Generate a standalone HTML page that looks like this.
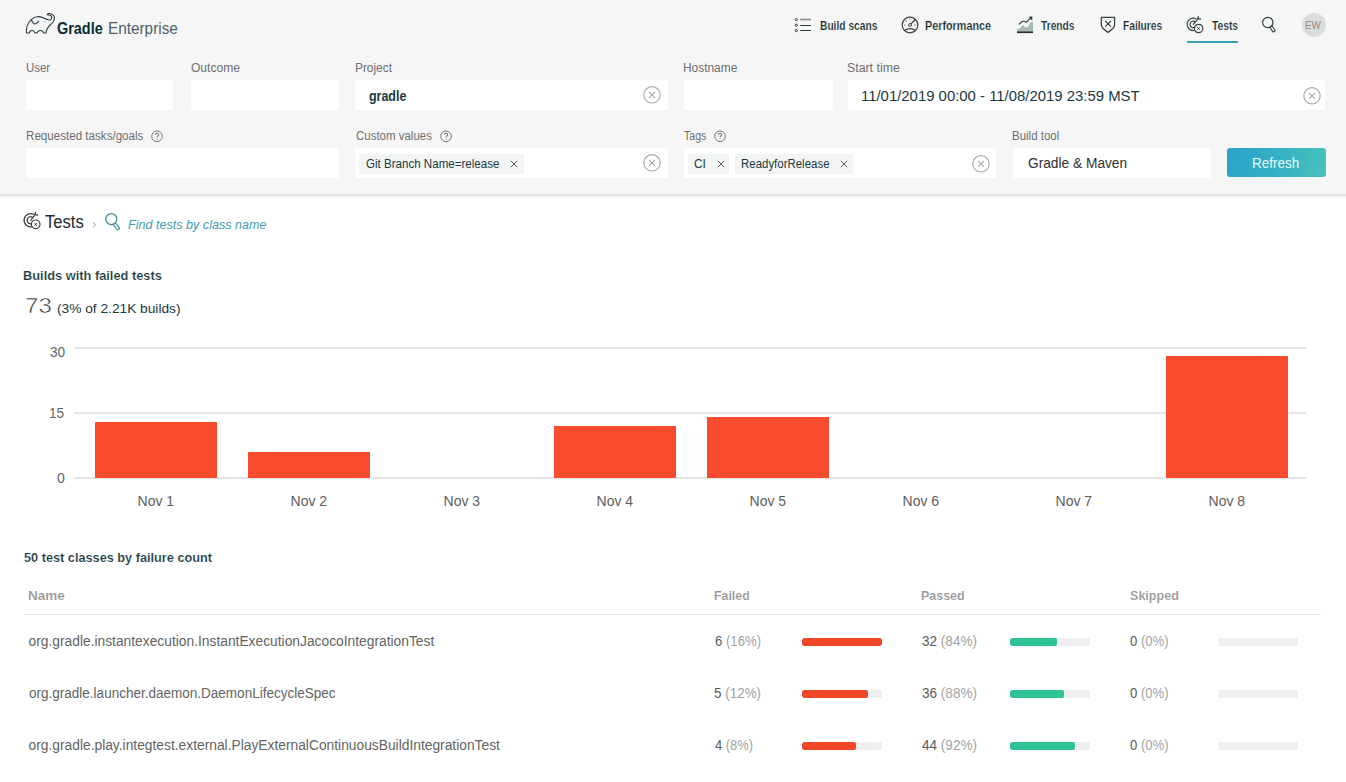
<!DOCTYPE html>
<html><head><meta charset="utf-8">
<style>
*{box-sizing:border-box;margin:0;padding:0}
html,body{width:1346px;height:782px;overflow:hidden;background:#fff;font-family:"Liberation Sans",sans-serif}
.a{position:absolute}
.t{position:absolute;white-space:nowrap;line-height:1}
#hdr{position:absolute;left:0;top:0;width:1346px;height:194px;background:#f6f6f6}
#hdrb{position:absolute;left:0;top:194px;width:1346px;height:2px;background:#e2e2e2}
#hdrs{position:absolute;left:0;top:196px;width:1346px;height:4px;background:linear-gradient(#f3f3f3,#fff)}
.inp{position:absolute;background:#fff;height:30px;border-radius:1px}
.chip{position:absolute;background:#f3f5f5;height:20px;top:154px;border-radius:2px}
.grid{position:absolute;left:74px;width:1232px;height:2px;background:#e4e4e4}
.bar{position:absolute;background:#fa4b2e;width:122px}
.trk{position:absolute;width:80px;height:8px;background:#efefef;border-radius:2px;overflow:hidden}
.trk i{position:absolute;left:0;top:0;bottom:0;border-radius:2px}
svg{position:absolute;overflow:visible}
</style></head><body>
<div id="hdr"></div><div id="hdrb"></div><div id="hdrs"></div>

<!-- logo -->
<svg style="left:24px;top:11px" width="32" height="24" viewBox="0 0 32 24" fill="none" stroke="#24383d" stroke-width="1.05" stroke-linejoin="round" stroke-linecap="round">
<path d="M2.4,22 C2.1,17.5 2.8,12.5 7.4,8.6 C9,7 11,5.8 14,5.6 C17,5.6 19.5,6.8 22,8 C24,9 26.2,9.7 27.3,8.3 C28.3,6.9 27.6,4.4 25.6,4 C24.6,3.8 23.6,4.1 23.1,3.7 C23.6,2.7 25.5,2.3 27.3,3 C29.5,3.9 30.6,6 30.3,8.2 C30,10.5 28,12.5 26.2,14 C24,16 22.3,18.5 22.1,22 L19.6,22 C19.4,20.4 18.2,19.5 16.6,19.5 C15,19.5 13.6,20.4 13,22 L11,22 C10.5,20.4 9.5,19.5 8.3,19.5 C7,19.5 5.6,20.4 5.2,22 Z"/>
<path d="M7.4,8.6 C8,10.5 9,12.6 10.7,12.9 C12,13.1 13.5,11.5 14.7,10.1"/>
<circle cx="20.9" cy="10.7" r="0.55" fill="#6a7a7d" stroke="none"/>
</svg>
<!-- nav icons -->
<svg style="left:790px;top:12px" width="26" height="26" viewBox="0 0 26 26" fill="none" stroke="#2a3a3d" stroke-width="1.2">
<circle cx="6.3" cy="7.6" r="1.15" stroke-width="0.95"/><circle cx="6.3" cy="13.2" r="1.15" stroke-width="0.95"/><circle cx="6.3" cy="18.5" r="1.15" stroke-width="0.95"/>
<path d="M10.2,7.5H21" stroke="#8a9696" stroke-width="1.7"/><path d="M10.2,13.5H21M10.2,18.5H21" stroke-width="1"/>
</svg>
<svg style="left:895px;top:12px" width="30" height="26" viewBox="0 0 30 26" fill="none" stroke="#3a4245" stroke-width="1.2">
<circle cx="15" cy="13" r="7.8"/>
<path d="M9.2,18.4 Q15,14.8 20.8,18.4"/>
<circle cx="15" cy="13" r="1.45" stroke-width="1"/>
<path d="M16.4,12.2 L15.6,11.5 L19.8,7.0 L20.8,8.0Z" fill="#2e3a3d" stroke="none"/>
<g fill="#777" stroke="none"><circle cx="11.3" cy="9.3" r="0.7"/><circle cx="15" cy="7.7" r="0.7"/><circle cx="10" cy="13" r="0.7"/><circle cx="20" cy="13" r="0.7"/></g>
</svg>
<svg style="left:1012px;top:12px" width="26" height="26" viewBox="0 0 26 26">
<path d="M5,20 L5,17.4 Q6.8,15.6 8.4,16.6 L9.8,13.8 Q10.7,12.6 11.7,13.6 L13.2,15.6 Q14.6,14.2 16,15.4 L18.2,10.8 Q18.8,10 20,10 L21,10.2 L21,20Z" fill="#a9b9b6"/>
<path d="M5,20.3H21" stroke="#1d2f30" stroke-width="1.6"/>
<path d="M7,12.3 Q9,9.5 11,9.3 T14.3,10.3 L19.6,5.3" fill="none" stroke="#3a4447" stroke-width="1.2"/>
<path d="M16.6,4.8 L20.4,4.6 L20.2,8.4Z" fill="#2c3d3f"/>
</svg>
<svg style="left:1095px;top:12px" width="26" height="26" viewBox="0 0 26 26" fill="none" stroke="#3a4245" stroke-width="1.3" stroke-linejoin="round">
<path d="M6.3,5.3 H19.6 V12.6 C19.6,15.5 16,18.5 13,20.4 C10,18.5 6.3,15.5 6.3,12.6 Z"/>
<path d="M10.3,9 L16,14.6 M16,9 L10.3,14.6" stroke-width="1.2"/>
</svg>
<svg id="tic" style="left:1182px;top:12px" width="26" height="26" viewBox="0 0 26 26" fill="none" stroke="#3a4245" stroke-width="1.2">
<path d="M14.4,7.03 A6.2,6.2 0 1 0 12.38,18.5"/>
<path d="M13.42,9.87 A3.3,3.3 0 1 0 12.43,15.5"/>
<path d="M11.3,12.4 L16.4,6.3" stroke-linecap="round"/>
<path d="M15.9,6.5 L16.3,4.6 M16.4,6.6 L18.4,7" stroke-width="1.3" stroke-linecap="round"/>
<circle cx="16.6" cy="16.5" r="4.2"/>
<path d="M15.3,15.2 L17.9,17.8 M17.9,15.2 L15.3,17.8" stroke-width="1"/>
</svg>
<div class="a" style="left:1187px;top:41px;width:51px;height:2px;background:#3aa0b7"></div>
<svg style="left:1255px;top:10px" width="26" height="26" viewBox="0 0 26 26" fill="none" stroke="#2b3b3e" stroke-width="1.3">
<circle cx="12.8" cy="12.5" r="5.2" stroke-width="1.2"/>
<rect x="-1.3" y="0" width="2.6" height="6" rx="0.4" transform="translate(15.9,16.5) rotate(-33.7)" stroke-width="1"/>
</svg>
<div class="a" style="left:1302px;top:13px;width:24px;height:24px;border-radius:50%;background:#dcdcdc"></div>

<!-- inputs -->
<div class="inp" style="left:26px;top:80px;width:147px"></div>
<div class="inp" style="left:191px;top:80px;width:148px"></div>
<div class="inp" style="left:355px;top:80px;width:313px"></div>
<div class="inp" style="left:684px;top:80px;width:149px"></div>
<div class="inp" style="left:848px;top:80px;width:477px"></div>
<div class="inp" style="left:26px;top:148px;width:313px"></div>
<div class="inp" style="left:355px;top:148px;width:313px"></div>
<div class="inp" style="left:684px;top:148px;width:312px"></div>
<div class="inp" style="left:1013px;top:148px;width:198px"></div>
<div class="a" style="left:1227px;top:148px;width:99px;height:29px;border-radius:3px;background:linear-gradient(100deg,#2ba3c9 0%,#35afc4 50%,#49c3ba 100%)"></div>

<!-- help icons -->
<svg style="left:151px;top:130px" width="12" height="12" viewBox="0 0 12 12" fill="none" stroke="#777" stroke-width="1"><circle cx="6" cy="6.3" r="5.3"/><path d="M4.3,4.8 C4.3,3.7 5,3.2 6,3.2 C7,3.2 7.7,3.8 7.7,4.7 C7.7,5.7 6.1,5.9 6.1,7.2" stroke-width="1.1"/><circle cx="6.1" cy="9" r="0.6" fill="#777" stroke="none"/></svg>
<svg style="left:440px;top:130px" width="12" height="12" viewBox="0 0 12 12" fill="none" stroke="#777" stroke-width="1"><circle cx="6" cy="6.3" r="5.3"/><path d="M4.3,4.8 C4.3,3.7 5,3.2 6,3.2 C7,3.2 7.7,3.8 7.7,4.7 C7.7,5.7 6.1,5.9 6.1,7.2" stroke-width="1.1"/><circle cx="6.1" cy="9" r="0.6" fill="#777" stroke="none"/></svg>
<svg style="left:714px;top:130px" width="12" height="12" viewBox="0 0 12 12" fill="none" stroke="#777" stroke-width="1"><circle cx="6" cy="6.3" r="5.3"/><path d="M4.3,4.8 C4.3,3.7 5,3.2 6,3.2 C7,3.2 7.7,3.8 7.7,4.7 C7.7,5.7 6.1,5.9 6.1,7.2" stroke-width="1.1"/><circle cx="6.1" cy="9" r="0.6" fill="#777" stroke="none"/></svg>

<!-- clear icons -->
<svg style="left:643px;top:86px" width="18" height="18" viewBox="0 0 18 18" fill="none" stroke="#a8a8a8" stroke-width="1.15"><circle cx="9" cy="8.8" r="8.2"/><path d="M6,5.8 L12,11.8 M12,5.8 L6,11.8"/></svg>
<svg style="left:643px;top:154px" width="18" height="18" viewBox="0 0 18 18" fill="none" stroke="#a8a8a8" stroke-width="1.15"><circle cx="9" cy="8.8" r="8.2"/><path d="M6,5.8 L12,11.8 M12,5.8 L6,11.8"/></svg>
<svg style="left:972px;top:155px" width="18" height="18" viewBox="0 0 18 18" fill="none" stroke="#a8a8a8" stroke-width="1.15"><circle cx="9" cy="8.8" r="8.2"/><path d="M6,5.8 L12,11.8 M12,5.8 L6,11.8"/></svg>
<svg style="left:1303px;top:87px" width="18" height="18" viewBox="0 0 18 18" fill="none" stroke="#a8a8a8" stroke-width="1.15"><circle cx="9" cy="8.8" r="8.2"/><path d="M6,5.8 L12,11.8 M12,5.8 L6,11.8"/></svg>

<!-- chips -->
<div class="chip" style="left:359px;width:165px"></div>
<div class="chip" style="left:688px;width:41px"></div>
<div class="chip" style="left:735px;width:118px"></div>
<svg style="left:510px;top:160px" width="8" height="8" viewBox="0 0 8 8" stroke="#606060" stroke-width="1"><path d="M0.8,0.8 L7.2,7.2 M7.2,0.8 L0.8,7.2"/></svg>
<svg style="left:717px;top:160px" width="8" height="8" viewBox="0 0 8 8" stroke="#606060" stroke-width="1"><path d="M0.8,0.8 L7.2,7.2 M7.2,0.8 L0.8,7.2"/></svg>
<svg style="left:840px;top:160px" width="8" height="8" viewBox="0 0 8 8" stroke="#606060" stroke-width="1"><path d="M0.8,0.8 L7.2,7.2 M7.2,0.8 L0.8,7.2"/></svg>

<!-- title icons -->
<svg style="left:20px;top:208px" width="24" height="24" viewBox="0 0 24 24" fill="none" stroke="#3a4245" stroke-width="1.2">
<path d="M14,6.6 A6.6,6.6 0 1 0 11.85,18.8"/>
<path d="M12.6,9.2 A3.6,3.6 0 1 0 11.8,15.7"/>
<path d="M10.7,12.3 L15.6,6.2" stroke-linecap="round"/>
<path d="M15.1,6.4 L15.5,4.5 M15.6,6.6 L17.6,7" stroke-width="1.3" stroke-linecap="round"/>
<circle cx="15.7" cy="16.3" r="4.3"/>
<path d="M14.4,15 L17,17.6 M17,15 L14.4,17.6" stroke-width="1"/>
</svg>
<svg style="left:88px;top:208px" width="40" height="28" viewBox="0 0 40 28" fill="none">
<path d="M5.3,14.2 L7.4,16.9 L5.3,19.6" stroke="#9a9a9a" stroke-width="1"/>
<circle cx="23.3" cy="11.1" r="5.5" stroke="#3c8e9c" stroke-width="1.3"/>
<rect x="-1.4" y="0" width="2.8" height="7" rx="0.5" transform="translate(26.4,15.7) rotate(-37)" stroke="#3c8e9c" stroke-width="1.1" fill="#e3f8fa"/>
</svg>

<!-- chart -->
<div class="grid" style="top:347px"></div>
<div class="grid" style="top:412px"></div>
<div class="grid" style="top:477px"></div>
<div class="bar" style="left:95px;top:422px;height:56px"></div>
<div class="bar" style="left:248px;top:452px;height:26px"></div>
<div class="bar" style="left:554px;top:426px;height:52px"></div>
<div class="bar" style="left:707px;top:417px;height:61px"></div>
<div class="bar" style="left:1166px;top:356px;height:122px"></div>

<!-- table -->
<div class="a" style="left:24px;top:614px;width:1297px;height:1px;background:#e6e6e6"></div>
<div class="trk" style="left:802px;top:638px"><i style="width:80px;background:#f4482c"></i></div>
<div class="trk" style="left:1010px;top:638px"><i style="width:47px;background:#2dc497"></i></div>
<div class="trk" style="left:1218px;top:638px"></div>
<div class="trk" style="left:802px;top:690px"><i style="width:66px;background:#f4482c"></i></div>
<div class="trk" style="left:1010px;top:690px"><i style="width:54px;background:#2dc497"></i></div>
<div class="trk" style="left:1218px;top:690px"></div>
<div class="trk" style="left:802px;top:742px"><i style="width:54px;background:#f4482c"></i></div>
<div class="trk" style="left:1010px;top:742px"><i style="width:65px;background:#2dc497"></i></div>
<div class="trk" style="left:1218px;top:742px"></div>

<div class="t" id="lg1" style="left:57.30px;top:21.00px;font-size:16px;color:#0b2e36;font-weight:bold;font-style:normal;transform:scaleX(0.9020);transform-origin:0 0;">Gradle</div>
<div class="t" id="lg2" style="left:107.80px;top:21.00px;font-size:16px;color:#4e5f66;font-weight:normal;font-style:normal;transform:scaleX(0.9577);transform-origin:0 0;">Enterprise</div>
<div class="t" id="nv0" style="left:820.10px;top:19.01px;font-size:13px;color:#142a2f;font-weight:bold;font-style:normal;transform:scaleX(0.7862);transform-origin:0 0;-webkit-text-stroke:0.2px #f6f6f6;">Build scans</div>
<div class="t" id="nv1" style="left:925.40px;top:19.01px;font-size:13px;color:#142a2f;font-weight:bold;font-style:normal;transform:scaleX(0.8305);transform-origin:0 0;-webkit-text-stroke:0.2px #f6f6f6;">Performance</div>
<div class="t" id="nv2" style="left:1041.30px;top:19.01px;font-size:13px;color:#142a2f;font-weight:bold;font-style:normal;transform:scaleX(0.7864);transform-origin:0 0;-webkit-text-stroke:0.2px #f6f6f6;">Trends</div>
<div class="t" id="nv3" style="left:1123.40px;top:19.01px;font-size:13px;color:#142a2f;font-weight:bold;font-style:normal;transform:scaleX(0.7840);transform-origin:0 0;-webkit-text-stroke:0.2px #f6f6f6;">Failures</div>
<div class="t" id="nv4" style="left:1211.50px;top:19.01px;font-size:13px;color:#142a2f;font-weight:bold;font-style:normal;transform:scaleX(0.7879);transform-origin:0 0;-webkit-text-stroke:0.2px #f6f6f6;">Tests</div>
<div class="t" id="ew" style="left:1305.20px;top:21.00px;font-size:10px;color:#8d8d8d;font-weight:normal;font-style:normal;transform:scaleX(0.9867);transform-origin:0 0;">EW</div>
<div class="t" id="lb0" style="left:25.50px;top:62.01px;font-size:12px;color:#6e6e6e;font-weight:normal;font-style:normal;transform:scaleX(0.9523);transform-origin:0 0;">User</div>
<div class="t" id="lb1" style="left:190.70px;top:62.01px;font-size:12px;color:#6e6e6e;font-weight:normal;font-style:normal;transform:scaleX(1.0042);transform-origin:0 0;">Outcome</div>
<div class="t" id="lb2" style="left:354.50px;top:62.01px;font-size:12px;color:#6e6e6e;font-weight:normal;font-style:normal;transform:scaleX(0.9893);transform-origin:0 0;">Project</div>
<div class="t" id="lb3" style="left:682.90px;top:62.01px;font-size:12px;color:#6e6e6e;font-weight:normal;font-style:normal;transform:scaleX(0.9926);transform-origin:0 0;">Hostname</div>
<div class="t" id="lb4" style="left:847.40px;top:62.01px;font-size:12px;color:#6e6e6e;font-weight:normal;font-style:normal;transform:scaleX(1.0280);transform-origin:0 0;">Start time</div>
<div class="t" id="lb5" style="left:25.50px;top:130.01px;font-size:12px;color:#6e6e6e;font-weight:normal;font-style:normal;transform:scaleX(0.9670);transform-origin:0 0;">Requested tasks/goals</div>
<div class="t" id="lb6" style="left:355.50px;top:130.01px;font-size:12px;color:#6e6e6e;font-weight:normal;font-style:normal;transform:scaleX(0.9567);transform-origin:0 0;">Custom values</div>
<div class="t" id="lb7" style="left:683.90px;top:130.01px;font-size:12px;color:#6e6e6e;font-weight:normal;font-style:normal;transform:scaleX(0.8800);transform-origin:0 0;">Tags</div>
<div class="t" id="lb8" style="left:1011.90px;top:130.01px;font-size:12px;color:#6e6e6e;font-weight:normal;font-style:normal;transform:scaleX(0.9583);transform-origin:0 0;">Build tool</div>
<div class="t" id="v1" style="left:368.60px;top:89.01px;font-size:14px;color:#1b3940;font-weight:bold;font-style:normal;transform:scaleX(0.8889);transform-origin:0 0;">gradle</div>
<div class="t" id="v2" style="left:860.90px;top:89.01px;font-size:14px;color:#1b3940;font-weight:normal;font-style:normal;transform:scaleX(1.0644);transform-origin:0 0;">11/01/2019 00:00 - 11/08/2019 23:59 MST</div>
<div class="t" id="v3" style="left:1027.70px;top:156.01px;font-size:14px;color:#303030;font-weight:normal;font-style:normal;transform:scaleX(0.9800);transform-origin:0 0;">Gradle &amp; Maven</div>
<div class="t" id="rf" style="left:1252.40px;top:156.01px;font-size:14px;color:#e6fbfd;font-weight:normal;font-style:normal;transform:scaleX(0.9638);transform-origin:0 0;">Refresh</div>
<div class="t" id="c1" style="left:366.10px;top:158.01px;font-size:12px;color:#1b3940;font-weight:normal;font-style:normal;transform:scaleX(0.9638);transform-origin:0 0;">Git Branch Name=release</div>
<div class="t" id="c2" style="left:694.00px;top:158.01px;font-size:12px;color:#1b3940;font-weight:normal;font-style:normal;transform:scaleX(0.9845);transform-origin:0 0;">CI</div>
<div class="t" id="c3" style="left:740.50px;top:158.01px;font-size:12px;color:#1b3940;font-weight:normal;font-style:normal;transform:scaleX(0.9545);transform-origin:0 0;">ReadyforRelease</div>
<div class="t" id="tt" style="left:45.20px;top:213.01px;font-size:18px;color:#1b2b2f;font-weight:normal;font-style:normal;transform:scaleX(0.9222);transform-origin:0 0;">Tests</div>
<div class="t" id="ft" style="left:127.50px;top:218.01px;font-size:13.5px;color:#3f9db3;font-weight:normal;font-style:italic;transform:scaleX(0.9324);transform-origin:0 0;">Find tests by class name</div>
<div class="t" id="bw" style="left:23.40px;top:269.01px;font-size:13px;color:#1b3940;font-weight:bold;font-style:normal;transform:scaleX(0.9857);transform-origin:0 0;-webkit-text-stroke:0.15px #fff;">Builds with failed tests</div>
<div class="t" id="n73" style="left:25.10px;top:295.01px;font-size:22px;color:#333;font-weight:normal;font-style:normal;transform:scaleX(1.0963);transform-origin:0 0;-webkit-text-stroke:0.55px #fff;">73</div>
<div class="t" id="pct" style="left:56.80px;top:302.01px;font-size:13px;color:#1b3940;font-weight:normal;font-style:normal;transform:scaleX(1.0552);transform-origin:0 0;">(3% of 2.21K builds)</div>
<div class="t" id="y30" style="left:50.30px;top:345.01px;font-size:14px;color:#666;font-weight:normal;font-style:normal;transform:scaleX(0.9754);transform-origin:0 0;">30</div>
<div class="t" id="y15" style="left:49.20px;top:406.01px;font-size:14px;color:#666;font-weight:normal;font-style:normal;transform:scaleX(0.9738);transform-origin:0 0;">15</div>
<div class="t" id="y0" style="left:57.40px;top:471.01px;font-size:14px;color:#666;font-weight:normal;font-style:normal;transform:scaleX(1.0045);transform-origin:0 0;">0</div>
<div class="t" id="nov0" style="left:137.55px;top:494.01px;font-size:14px;color:#5e5e5e;font-weight:normal;font-style:normal;">Nov 1</div>
<div class="t" id="nov1" style="left:290.55px;top:494.01px;font-size:14px;color:#5e5e5e;font-weight:normal;font-style:normal;">Nov 2</div>
<div class="t" id="nov2" style="left:443.55px;top:494.01px;font-size:14px;color:#5e5e5e;font-weight:normal;font-style:normal;">Nov 3</div>
<div class="t" id="nov3" style="left:596.55px;top:494.01px;font-size:14px;color:#5e5e5e;font-weight:normal;font-style:normal;">Nov 4</div>
<div class="t" id="nov4" style="left:749.55px;top:494.01px;font-size:14px;color:#5e5e5e;font-weight:normal;font-style:normal;">Nov 5</div>
<div class="t" id="nov5" style="left:902.55px;top:494.01px;font-size:14px;color:#5e5e5e;font-weight:normal;font-style:normal;">Nov 6</div>
<div class="t" id="nov6" style="left:1055.55px;top:494.01px;font-size:14px;color:#5e5e5e;font-weight:normal;font-style:normal;">Nov 7</div>
<div class="t" id="nov7" style="left:1208.55px;top:494.01px;font-size:14px;color:#5e5e5e;font-weight:normal;font-style:normal;">Nov 8</div>
<div class="t" id="tc" style="left:24.40px;top:551.01px;font-size:13px;color:#1b3940;font-weight:bold;font-style:normal;transform:scaleX(0.9781);transform-origin:0 0;-webkit-text-stroke:0.15px #fff;">50 test classes by failure count</div>
<div class="t" id="h0" style="left:27.80px;top:589.01px;font-size:13px;color:#959595;font-weight:bold;font-style:normal;transform:scaleX(1.0412);transform-origin:0 0;-webkit-text-stroke:0.15px #fff;">Name</div>
<div class="t" id="h1" style="left:713.80px;top:589.01px;font-size:13px;color:#959595;font-weight:bold;font-style:normal;transform:scaleX(0.9501);transform-origin:0 0;-webkit-text-stroke:0.15px #fff;">Failed</div>
<div class="t" id="h2" style="left:921.30px;top:589.01px;font-size:13px;color:#959595;font-weight:bold;font-style:normal;transform:scaleX(0.9568);transform-origin:0 0;-webkit-text-stroke:0.15px #fff;">Passed</div>
<div class="t" id="h3" style="left:1130.30px;top:589.01px;font-size:13px;color:#959595;font-weight:bold;font-style:normal;transform:scaleX(0.9660);transform-origin:0 0;-webkit-text-stroke:0.15px #fff;">Skipped</div>
<div class="t" id="nm0" style="left:28.50px;top:635.00px;font-size:13.8px;color:#636363;font-weight:normal;font-style:normal;">org.gradle.instantexecution.InstantExecutionJacocoIntegrationTest</div>
<div class="t" id="fa0" style="left:714.60px;top:635.00px;font-size:13.8px;color:#5a5a5a;font-weight:normal;font-style:normal;transform:scaleX(0.9542);transform-origin:0 0;">6 <span style="color:#a3a3a3">(16%)</span></div>
<div class="t" id="pa0" style="left:922.30px;top:635.00px;font-size:13.8px;color:#5a5a5a;font-weight:normal;font-style:normal;transform:scaleX(0.9818);transform-origin:0 0;">32 <span style="color:#a3a3a3">(84%)</span></div>
<div class="t" id="sk0" style="left:1130.30px;top:635.00px;font-size:13.8px;color:#5a5a5a;font-weight:normal;font-style:normal;transform:scaleX(0.9475);transform-origin:0 0;">0 <span style="color:#a3a3a3">(0%)</span></div>
<div class="t" id="nm1" style="left:28.50px;top:687.00px;font-size:13.8px;color:#636363;font-weight:normal;font-style:normal;transform:scaleX(0.9796);transform-origin:0 0;">org.gradle.launcher.daemon.DaemonLifecycleSpec</div>
<div class="t" id="fa1" style="left:713.60px;top:687.00px;font-size:13.8px;color:#5a5a5a;font-weight:normal;font-style:normal;transform:scaleX(0.9745);transform-origin:0 0;">5 <span style="color:#a3a3a3">(12%)</span></div>
<div class="t" id="pa1" style="left:922.30px;top:687.00px;font-size:13.8px;color:#5a5a5a;font-weight:normal;font-style:normal;transform:scaleX(0.9818);transform-origin:0 0;">36 <span style="color:#a3a3a3">(88%)</span></div>
<div class="t" id="sk1" style="left:1130.30px;top:687.00px;font-size:13.8px;color:#5a5a5a;font-weight:normal;font-style:normal;transform:scaleX(0.9475);transform-origin:0 0;">0 <span style="color:#a3a3a3">(0%)</span></div>
<div class="t" id="nm2" style="left:28.50px;top:739.00px;font-size:13.8px;color:#636363;font-weight:normal;font-style:normal;">org.gradle.play.integtest.external.PlayExternalContinuousBuildIntegrationTest</div>
<div class="t" id="fa2" style="left:714.60px;top:739.00px;font-size:13.8px;color:#5a5a5a;font-weight:normal;font-style:normal;transform:scaleX(0.9375);transform-origin:0 0;">4 <span style="color:#a3a3a3">(8%)</span></div>
<div class="t" id="pa2" style="left:922.30px;top:739.00px;font-size:13.8px;color:#5a5a5a;font-weight:normal;font-style:normal;transform:scaleX(0.9818);transform-origin:0 0;">44 <span style="color:#a3a3a3">(92%)</span></div>
<div class="t" id="sk2" style="left:1130.30px;top:739.00px;font-size:13.8px;color:#5a5a5a;font-weight:normal;font-style:normal;transform:scaleX(0.9475);transform-origin:0 0;">0 <span style="color:#a3a3a3">(0%)</span></div>
</body></html>
